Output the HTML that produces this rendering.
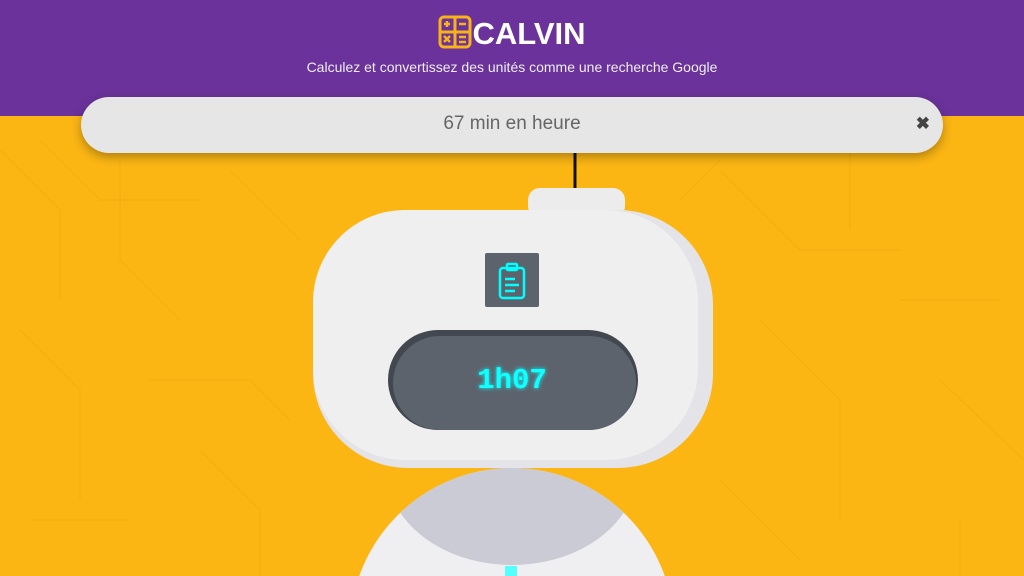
<!DOCTYPE html>
<html><head><style>
html,body{margin:0;padding:0;overflow:hidden;width:1024px;height:576px;}
body{position:relative;background:#fbb614;font-family:"Liberation Sans",sans-serif;}
.hdr{position:absolute;left:0;top:0;width:1024px;height:116px;background:#6a329a;}
.title{position:absolute;top:15px;left:0;width:1024px;text-align:center;color:#fff;font-size:31px;font-weight:bold;line-height:38px;}
.sub{position:absolute;top:58px;left:0;width:1024px;text-align:center;color:#eee;font-size:14px;line-height:18px;}
.search{position:absolute;left:81px;top:97px;width:862px;height:56px;border-radius:28px;background:#e6e6e6;box-shadow:0 4px 10px rgba(0,0,0,.3);text-align:center;line-height:54px;font-size:19px;color:#666;}
.x{position:absolute;right:13px;top:0;font-size:17px;color:#444;font-weight:bold;}
</style></head><body>
<svg width="1024" height="576" style="position:absolute;left:0;top:0">
<g stroke="#f2ab10" stroke-width="1.5" fill="none" opacity=".6">
<path d="M0 150 L60 210 L60 300 M40 140 L100 200 L200 200 M120 160 L120 260 L180 320 M20 330 L80 390 L80 500 M150 380 L250 380 L290 420 M200 450 L260 510 L260 576 M30 520 L130 520 M720 170 L800 250 L900 250 M850 150 L850 230 M760 320 L840 400 L840 520 M900 300 L1000 300 M940 380 L1024 460 M720 480 L800 560 M960 520 L960 576 M230 170 L300 240 M680 200 L720 160"/>
</g>
<line x1="575" y1="150" x2="575" y2="190" stroke="#111" stroke-width="3"/>
<rect x="528" y="188" width="97" height="30" rx="12" fill="#ececec"/>
<defs><clipPath id="c"><circle cx="512" cy="630" r="162"/></clipPath></defs>
<g clip-path="url(#c)">
<rect x="300" y="460" width="424" height="116" fill="#efeff1"/>
<ellipse cx="512" cy="470" rx="125" ry="95" fill="#cbcbd6"/>
</g>
<rect x="505" y="566" width="12" height="10" fill="#5ff"/>
<rect x="313" y="210" width="400" height="258" rx="95" fill="#e3e3e8"/>
<rect x="313" y="210" width="385" height="250" rx="92" fill="#efefef"/>
<rect x="485" y="253" width="54" height="54" rx="2" fill="#5d636d"/>
<g stroke="#0ff" stroke-width="2.5" fill="none">
<rect x="500" y="268" width="24" height="30" rx="3"/>
<rect x="507" y="264" width="10" height="6" rx="1"/>
<path d="M505 279h10M505 285h14M505 291h10"/>
</g>
<rect x="388" y="330" width="250" height="100" rx="50" fill="#434850"/>
<rect x="393" y="336" width="243" height="94" rx="47" fill="#5d636d"/>
<text x="512" y="388" text-anchor="middle" font-family="Liberation Mono,monospace" font-weight="bold" font-size="29" fill="#1ff" style="filter:drop-shadow(0 0 2px #0ff)">1h07</text>
</svg>
<div class="hdr"></div>
<div class="title"><svg width="34" height="34" viewBox="0 0 34 34" style="vertical-align:-5px"><rect x="2" y="2" width="30" height="30" rx="4" fill="none" stroke="#f8b316" stroke-width="3"/><path d="M17 2v30M2 17h30" stroke="#f8b316" stroke-width="3"/><path d="M6 9h6M9 6v6M21 9h7M6 21l6 6M12 21l-6 6M21 22h7M21 27h7" stroke="#f8b316" stroke-width="2.5"/></svg>CALVIN</div>
<div class="sub">Calculez et convertissez des unités comme une recherche Google</div>
<div class="search">67 min en heure<span class="x">✖</span></div>
</body></html>
